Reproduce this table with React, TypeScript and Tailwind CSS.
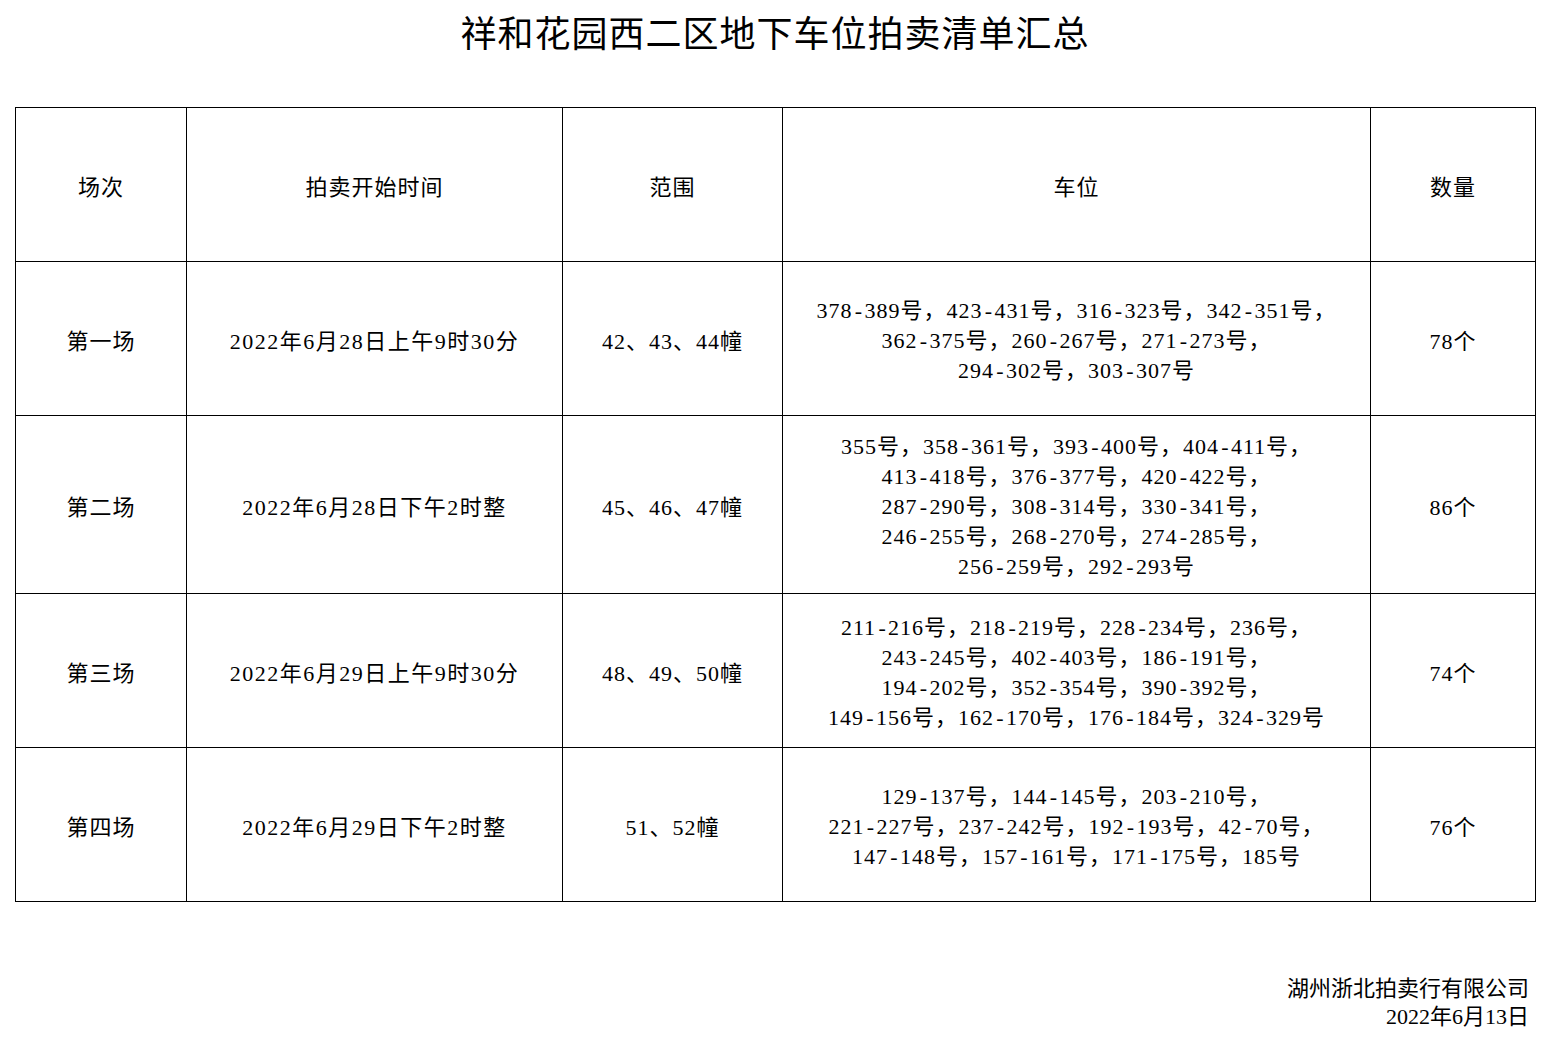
const rows = [
  {
    name: "第一场",
    time: "2022年6月28日上午9时30分",
    range: "42、43、44幢",
    spots: [
      "378-389号，423-431号，316-323号，342-351号，",
      "362-375号，260-267号，271-273号，",
      "294-302号，303-307号",
    ],
    count: "78个",
    h: "h-[154px]",
  },
  {
    name: "第二场",
    time: "2022年6月28日下午2时整",
    range: "45、46、47幢",
    spots: [
      "355号，358-361号，393-400号，404-411号，",
      "413-418号，376-377号，420-422号，",
      "287-290号，308-314号，330-341号，",
      "246-255号，268-270号，274-285号，",
      "256-259号，292-293号",
    ],
    count: "86个",
    h: "h-[178px]",
  },
  {
    name: "第三场",
    time: "2022年6月29日上午9时30分",
    range: "48、49、50幢",
    spots: [
      "211-216号，218-219号，228-234号，236号，",
      "243-245号，402-403号，186-191号，",
      "194-202号，352-354号，390-392号，",
      "149-156号，162-170号，176-184号，324-329号",
    ],
    count: "74个",
    h: "h-[154px]",
  },
  {
    name: "第四场",
    time: "2022年6月29日下午2时整",
    range: "51、52幢",
    spots: [
      "129-137号，144-145号，203-210号，",
      "221-227号，237-242号，192-193号，42-70号，",
      "147-148号，157-161号，171-175号，185号",
    ],
    count: "76个",
    h: "h-[154px]",
  },
];

const cell = "border border-black text-center align-middle px-0 pb-0 pt-[5px]";

function Spot({ text }: { text: string }) {
  const parts = text.split("-");
  return (
    <div className="whitespace-nowrap">
      {parts.map((p, i) => (
        <span key={i}>
          {i > 0 && <span className="inline-block w-[12px] text-center tracking-normal">-</span>}
          {p}
        </span>
      ))}
    </div>
  );
}

export default function App() {
  return (
    <div className="w-[1550px] h-[1041px] bg-white text-black font-['Liberation_Serif','Noto_Sans_CJK_SC',serif] text-[22px] tracking-[1px]">
      <h1 className="pt-[16px] text-center text-[36px] leading-[38px] tracking-[1px]">
        祥和花园西二区地下车位拍卖清单汇总
      </h1>

      <table className="mt-[53px] ml-[15px] w-[1520px] border-collapse table-fixed">
        <colgroup>
          <col className="w-[171px]" />
          <col className="w-[376px]" />
          <col className="w-[220px]" />
          <col className="w-[588px]" />
          <col className="w-[165px]" />
        </colgroup>
        <tbody>
          <tr className="h-[154px]">
            <td className={cell}>场次</td>
            <td className={cell}>拍卖开始时间</td>
            <td className={cell}>范围</td>
            <td className={cell}>车位</td>
            <td className={cell}>数量</td>
          </tr>
          {rows.map((r) => (
            <tr key={r.name} className={r.h}>
              <td className={cell}>{r.name}</td>
              <td className={`${cell} tracking-[1.5px]`}>{r.time}</td>
              <td className={cell}>{r.range}</td>
              <td className={`${cell} leading-[30px]`}>
                {r.spots.map((s) => (
                  <Spot key={s} text={s} />
                ))}
              </td>
              <td className={cell}>{r.count}</td>
            </tr>
          ))}
        </tbody>
      </table>

      <div className="mt-[73px] pr-[21px] text-right leading-[28px] tracking-normal">
        <div>湖州浙北拍卖行有限公司</div>
        <div>2022年6月13日</div>
      </div>
    </div>
  );
}
